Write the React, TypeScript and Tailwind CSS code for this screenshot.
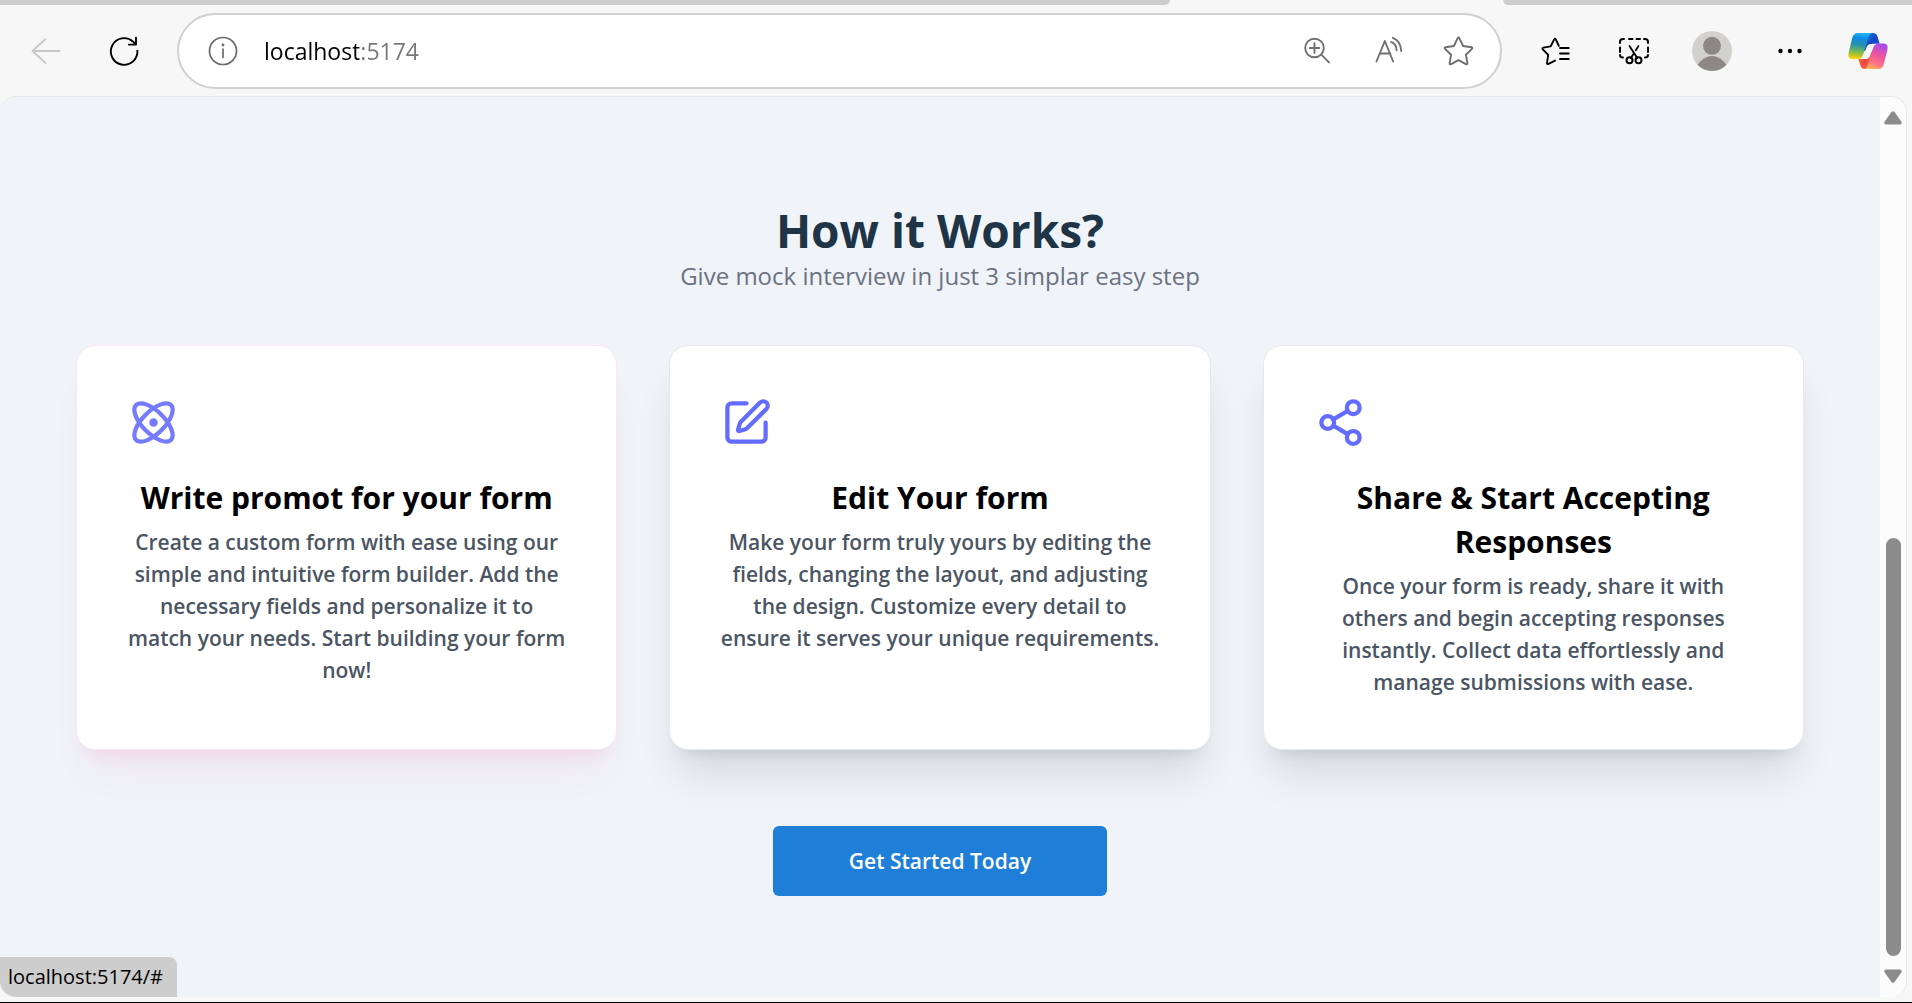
import type { ReactNode } from "react";
import { Atom, Share2, SquarePen } from "lucide-react";

function IconButton({ label, children }: { label: string; children: ReactNode }) {
  return (
    <button type="button" aria-label={label} className="flex size-10 shrink-0 items-center justify-center">
      {children}
    </button>
  );
}

function BackIcon() {
  return (
    <svg width="32" height="32" viewBox="0 0 32 32" fill="none" stroke="#c8c8c8" strokeWidth="1.8" strokeLinecap="round" strokeLinejoin="round">
      <path d="M29.5 16H2.5M15.5 4 2.5 16l13 12" />
    </svg>
  );
}

function ReloadIcon() {
  return (
    <svg width="32" height="32" viewBox="0 0 32 32" fill="none" stroke="#000" strokeWidth="1.9" strokeLinecap="round" strokeLinejoin="round">
      <path d="M29.4 15.8A13.3 13.3 0 1 1 25 6.6l2.9 2.8M28 2.6v7h-7.2" />
    </svg>
  );
}

function InfoIcon() {
  return (
    <svg width="32" height="32" viewBox="0 0 32 32" fill="none" stroke="#6b6b6b" strokeWidth="1.7" strokeLinecap="round">
      <circle cx="16" cy="16" r="13.5" />
      <path d="M16 14v8.5" />
      <circle cx="16" cy="10" r="1.4" fill="#6b6b6b" stroke="none" />
    </svg>
  );
}

function ZoomIcon() {
  return (
    <svg width="32" height="32" viewBox="0 0 32 32" fill="none" stroke="#707070" strokeWidth="1.9" strokeLinecap="round">
      <circle cx="13.5" cy="13" r="9.3" />
      <path d="m20.3 19.6 7.7 7.8M13.5 8.3v9.4M8.8 13h9.4" />
    </svg>
  );
}

function ReadAloudIcon() {
  return (
    <svg width="32" height="32" viewBox="0 0 32 32" fill="none" stroke="#707070" strokeWidth="1.9" strokeLinecap="round" strokeLinejoin="round">
      <path d="m4.500 26.500 8.300-20.500 8.400 20.500M7.500 18.500h10.800M19.200 7c3 1 5.200 4 5.400 8.200M20.800 2.800c5 1.700 8 6.400 8.400 13.200" />
    </svg>
  );
}

function StarIcon() {
  return (
    <svg width="32" height="32" viewBox="0 0 32 32" fill="none" stroke="#6e6e6e" strokeWidth="1.9" strokeLinejoin="round">
      <path d="M14.600 3.400q.9-1.700 1.800 0l3.700 7.600 8.200 1.200q1.700.4.600 1.700l-6 5.800 1.500 8.400q.100 1.700-1.500 1l-7.400-4-7.400 4q-1.600.7-1.500-1l1.500-8.400-6-5.800q-1.100-1.300.6-1.700l8.200-1.200z" />
    </svg>
  );
}

function FavoritesIcon() {
  return (
    <svg width="32" height="32" viewBox="0 0 32 32" fill="none" stroke="#000" strokeWidth="1.9" strokeLinecap="round" strokeLinejoin="round">
      <path d="m18.800 10.800-3-6.400q-.800-1.400-1.600 0l-3.500 7-7.300 1.200q-1.600.4-.600 1.700l5.400 5.600-1.200 8q0 1.600 1.500 1l6.500-3.300" />
      <path d="M20 13h8.800M20 18.500h8.800M20 24h8.800" />
    </svg>
  );
}

function ScreenshotIcon() {
  return (
    <svg width="32" height="32" viewBox="0 0 32 32" fill="none" stroke="#000" strokeWidth="2" strokeLinecap="round" strokeLinejoin="round">
      <path d="M2 8V7q0-3 3-3h1M11 4h3.500M18.500 4H22M26 4h1q3 0 3 3v1M30 12.500v4.500M2 12.500v4.500M2 20q0 2.500 3 2.500M30 20q0 2.500-3 2.500" />
      <path d="m11.500 11 7.700 12M20.500 11l-2.700 4.300M15.300 19.300 12.800 23" strokeWidth="1.800" />
      <circle cx="11.500" cy="25.300" r="3" />
      <circle cx="20.500" cy="25.300" r="3" />
    </svg>
  );
}

function ProfileIcon() {
  return (
    <svg width="40" height="40" viewBox="0 0 40 40">
      <circle cx="20" cy="20" r="20" fill="#d3d1cd" />
      <circle cx="20" cy="14.800" r="9" fill="#8d8885" />
      <path d="M5.500 33.800Q12 25 20 25t14.500 8.800Q28.500 40 20 40T5.500 33.800Z" fill="#8d8885" />
    </svg>
  );
}

function MoreIcon() {
  return (
    <svg width="32" height="32" viewBox="0 0 32 32">
      <circle cx="6.500" cy="16" r="2.200" />
      <circle cx="16" cy="16" r="2.200" />
      <circle cx="25.500" cy="16" r="2.200" />
    </svg>
  );
}

function CopilotIcon() {
  return (
    <svg width="40" height="40" viewBox="0 0 40 40">
      <defs>
        <linearGradient id="ribbonLeft" x1="0.550" y1="0" x2="0.450" y2="1">
          <stop offset="0" stopColor="#20b5f5" />
          <stop offset="0.2" stopColor="#0c8ce4" />
          <stop offset="0.45" stopColor="#2591b0" />
          <stop offset="0.7" stopColor="#6db55c" />
          <stop offset="1" stopColor="#fbd302" />
        </linearGradient>
        <linearGradient id="foldTop" x1="0" y1="0" x2="1" y2="1">
          <stop offset="0" stopColor="#1a8df0" />
          <stop offset="0.500" stopColor="#1647c4" />
          <stop offset="1" stopColor="#2360e6" />
        </linearGradient>
        <linearGradient id="ribbonRight" x1="0.700" y1="0" x2="0.350" y2="1">
          <stop offset="0" stopColor="#a64bf0" />
          <stop offset="0.450" stopColor="#ee559b" />
          <stop offset="0.750" stopColor="#fd7187" />
          <stop offset="1" stopColor="#ffb357" />
        </linearGradient>
        <linearGradient id="foldBottom" x1="0" y1="0" x2="0.800" y2="1">
          <stop offset="0" stopColor="#ff9a3d" />
          <stop offset="0.600" stopColor="#f2483f" />
          <stop offset="1" stopColor="#fb6b4c" />
        </linearGradient>
      </defs>
      <path d="M21 2h4q3.500 0 4.500 3.500l2.200 7.300h-5.500q-5 0-6.500 5L14 22Z" fill="url(#foldTop)" />
      <path d="M19 38h-2q-3.500 0-4.500-3.500L10.300 28H14q5 0 6.500-5l5.500-6Z" fill="url(#foldBottom)" />
      <path d="M9.500 2H25q-3.300 0-4.800 5l-4.800 16q-1.500 5-5.500 5H4.500Q-.500 28 .6 22L4 7.500Q5.500 2 9.500 2Z" fill="url(#ribbonLeft)" />
      <path d="M30.800 38H15.500q3.500 0 4.800-5L25 17q1.500-4.500 5.500-4.500h5q5 0 3.900 6L36 32.500Q34.500 38 30.800 38Z" fill="url(#ribbonRight)" />
      <path d="m14.800 28 3.500-11q1.200-3.800 4.700-4h3.500L22 25q-1 3-4 3Z" fill="#f7f7f7" />
    </svg>
  );
}

function BrowserToolbar() {
  return (
    <header className="bg-[#f7f7f7]">
      <div className="flex h-[5px] justify-between">
        <div className="w-[61.2%] rounded-br-xl bg-[#cdcdcd]" />
        <div className="w-[21.4%] rounded-bl-xl bg-[#cdcdcd]" />
      </div>
      <nav aria-label="Browser" className="flex h-[91px] items-center pr-6 pl-[26px]">
        <div className="flex shrink-0 gap-[38px] pr-[33px]">
          <IconButton label="Back">
            <BackIcon />
          </IconButton>
          <IconButton label="Reload">
            <ReloadIcon />
          </IconButton>
        </div>
        <form className="flex h-[76px] flex-1 items-center rounded-full border-2 border-[#d0d0d0] bg-white pr-[21px] pl-6">
          <IconButton label="Site information">
            <InfoIcon />
          </IconButton>
          <input
            aria-label="Address"
            defaultValue="localhost:5174"
            className="ml-[21px] min-w-0 flex-1 bg-[linear-gradient(to_right,#000_95px,#767676_95px)] bg-clip-text text-[23px] leading-8 text-transparent outline-none"
          />
          <div className="flex gap-[31px]">
            <IconButton label="Zoom">
              <ZoomIcon />
            </IconButton>
            <IconButton label="Read aloud">
              <ReadAloudIcon />
            </IconButton>
            <IconButton label="Add to favorites">
              <StarIcon />
            </IconButton>
          </div>
        </form>
        <div className="flex shrink-0 gap-[38px] pl-[34px]">
          <IconButton label="Favorites">
            <FavoritesIcon />
          </IconButton>
          <IconButton label="Screenshot">
            <ScreenshotIcon />
          </IconButton>
          <IconButton label="Profile">
            <ProfileIcon />
          </IconButton>
          <IconButton label="More">
            <MoreIcon />
          </IconButton>
          <IconButton label="Copilot">
            <CopilotIcon />
          </IconButton>
        </div>
      </nav>
    </header>
  );
}

function Scrollbar() {
  return (
    <div className="flex w-[26px] shrink-0 flex-col items-center bg-[#fcfcfc] py-[14px]">
      <button type="button" aria-label="Scroll up">
        <svg width="18" height="14" viewBox="0 0 18 14" fill="#8b8b8b">
          <path d="M7.300 1.200q1.700-2 3.400 0l6.600 9.300q1.200 2.700-1.300 3H2q-2.500-.3-1.300-3Z" />
        </svg>
      </button>
      <div className="flex w-[15px] flex-1 flex-col justify-end pt-3 pb-[13px]">
        <div className="h-[51%] rounded-full bg-[#8b8b8b]" />
      </div>
      <button type="button" aria-label="Scroll down">
        <svg width="18" height="14" viewBox="0 0 18 14" fill="#8b8b8b">
          <path d="M7.300 12.800q1.700 2 3.400 0l6.600-9.300Q18.500.8 16 .5H2Q-.5.8.7 3.500Z" />
        </svg>
      </button>
    </div>
  );
}

const darkCard =
  "rounded-[19px] border border-[#e6e8ea] bg-white px-[49px] py-[51px] shadow-[0_32px_40px_-8px_rgba(0,0,0,0.1),0_13px_16px_-10px_rgba(0,0,0,0.1)]";
const pinkCard =
  "rounded-[19px] border border-[#fce7f3] bg-white px-[49px] py-[51px] shadow-[0_32px_40px_-8px_rgba(236,72,153,0.08),0_13px_16px_-10px_rgba(236,72,153,0.12)]";

const steps = [
  {
    icon: <Atom size={51} className="ml-[2px] text-[#747bff]" />,
    title: "Write promot for your form",
    text: "Create a custom form with ease using our simple and intuitive form builder. Add the necessary fields and personalize it to match your needs. Start building your form now!",
    card: pinkCard,
  },
  {
    icon: <SquarePen size={51} className="ml-[2px] text-[#646cff]" />,
    title: "Edit Your form",
    text: "Make your form truly yours by editing the fields, changing the layout, and adjusting the design. Customize every detail to ensure it serves your unique requirements.",
    card: darkCard,
  },
  {
    icon: <Share2 size={51} className="ml-[2px] text-[#646cff]" />,
    title: "Share & Start Accepting Responses",
    text: "Once your form is ready, share it with others and begin accepting responses instantly. Collect data effortlessly and manage submissions with ease.",
    card: darkCard,
  },
];

export default function App() {
  return (
    <div className="flex min-h-screen flex-col border-b border-black bg-[#f7f7f7] font-['Open_Sans','Noto_Sans',sans-serif]">
      <BrowserToolbar />
      <div className="relative mr-[5px] mb-[5px] flex flex-1 overflow-hidden rounded-2xl border-t border-r border-[#e6e6e6] bg-[#f0f4f9]">
        <main className="flex-1 px-[76px] pt-[103px] pb-[90px] text-center">
          <h2 className="text-[46px] leading-[60px] font-bold text-[#203448]">How it Works?</h2>
          <p className="text-2xl leading-8 text-[#6b7280]">Give mock interview in just 3 simplar easy step</p>
          <div className="mt-[53px] grid grid-cols-3 gap-[52px]">
            {steps.map((step) => (
              <a key={step.title} href="#" className={step.card}>
                {step.icon}
                <h3 className="mt-7 text-[30px] leading-[44px] font-bold text-black">{step.title}</h3>
                <p className="mt-[6px] text-[21px] leading-8 font-semibold text-[#4b5563]">{step.text}</p>
              </a>
            ))}
          </div>
          <a
            href="#"
            className="mt-[76px] inline-block rounded-md bg-[#1f7fd8] px-[76px] py-[19px] text-[21px] leading-8 font-semibold text-white"
          >
            Get Started Today
          </a>
        </main>
        <Scrollbar />
        <div className="absolute bottom-0 left-0 rounded-tr-lg bg-[#cdcdcd] py-1 pr-[14px] pl-2 text-xl leading-8 text-black">
          localhost:5174/#
        </div>
      </div>
    </div>
  );
}
